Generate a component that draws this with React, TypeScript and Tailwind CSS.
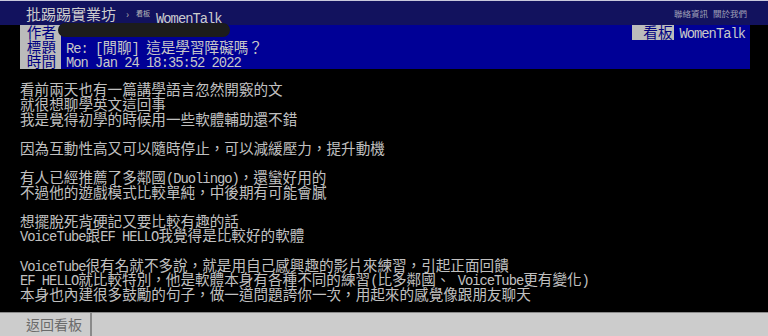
import React from 'react';

const ASCII = /^[\x20-\x7e]+$/;

// half-width runs get a narrow mono face so they take half a CJK cell
const Txt: React.FC<{ s: string }> = ({ s }) => (
  <>
    {s.split(/([\x20-\x7e]+)/).map((p, i) =>
      ASCII.test(p) ? (
        <span
          key={i}
          className="inline-block h-[14.6px] leading-[14.6px] whitespace-pre font-['Liberation_Mono',monospace] text-[13.8px] tracking-[-1px]"
        >
          {p}
        </span>
      ) : (
        <React.Fragment key={i}>{p}</React.Fragment>
      )
    )}
  </>
);

const body = [
  '看前兩天也有一篇講學語言忽然開竅的文',
  '就很想聊學英文這回事',
  '我是覺得初學的時候用一些軟體輔助還不錯',
  '',
  '因為互動性高又可以隨時停止，可以減緩壓力，提升動機',
  '',
  '有人已經推薦了多鄰國(Duolingo)，還蠻好用的',
  '不過他的遊戲模式比較單純，中後期有可能會膩',
  '',
  '想擺脫死背硬記又要比較有趣的話',
  'VoiceTube跟EF HELLO我覺得是比較好的軟體',
  '',
  'VoiceTube很有名就不多說，就是用自己感興趣的影片來練習，引起正面回饋',
  'EF HELLO就比較特別，他是軟體本身有各種不同的練習(比多鄰國、 VoiceTube更有變化)',
  '本身也內建很多鼓勵的句子，做一道問題誇你一次，用起來的感覺像跟朋友聊天',
];

const MetaRow: React.FC<{ tag: string; children?: React.ReactNode; right?: boolean }> = ({ tag, children, right }) => (
  <div className="flex h-[14.6px] items-center">
    <div className="w-[41px] h-full bg-[#bbbbbb] text-[#000080] text-right pr-[5px] leading-[14.6px]">{tag}</div>
    <div className="relative flex-1 h-full pl-[5px] leading-[14.6px] whitespace-pre text-[#c8c8c8]">{children}</div>
    {right && (
      <div className="flex h-full items-center">
        <div className="w-[42px] h-full bg-[#bbbbbb] text-[#000080] text-right pr-[2px] leading-[14.6px]">看板</div>
        <div className="h-full pl-[5px] pr-[5px] leading-[14.6px] text-[#c8c8c8]">
          <Txt s="WomenTalk" />
        </div>
      </div>
    )}
  </div>
);

export default function App() {
  return (
    <div className="w-[768px] h-[336px] bg-black flex flex-col overflow-hidden font-['Noto_Sans_CJK_TC',sans-serif] text-[14.6px]">
      <div className="h-px bg-[#c8c8dc]" />
      {/* top bar */}
      <div className="h-[24px] bg-[#12125e] flex items-center pl-[26px] pr-[21px] text-[#cccccc]">
        <span className="text-[15px] leading-none">批踢踢實業坊</span>
        <span className="ml-[10px] text-[10px] text-[#aaaaaa]">›</span>
        <span className="ml-[7px] text-[7px] text-[#bbbbbb]">看板</span>
        <span className="ml-[6px] h-[14.6px] text-[#cccccc]">
          <Txt s="WomenTalk" />
        </span>
        <div className="ml-auto flex gap-[5px] text-[8.5px] text-[#a0a0b8]">
          <span>聯絡資訊</span>
          <span>關於我們</span>
        </div>
      </div>

      {/* article meta */}
      <div className="mx-[20px] w-[730px] bg-[#000096]">
        <MetaRow tag="作者" right>
          <div className="absolute left-[-3px] top-[-2px] w-[172px] h-[14px] rounded-full bg-[#1c1c1c]" />
        </MetaRow>
        <MetaRow tag="標題">
          <Txt s="Re: [閒聊] 這是學習障礙嗎？" />
        </MetaRow>
        <MetaRow tag="時間">
          <Txt s="Mon Jan 24 18:35:52 2022" />
        </MetaRow>
      </div>

      {/* content */}
      <div className="pl-[20px] mt-[13.7px] text-[#c0c0c0]">
        {body.map((l, i) => (
          <div key={i} className="h-[14.6px] leading-[14.6px] whitespace-pre">
            <Txt s={l} />
          </div>
        ))}
      </div>

      {/* bottom bar */}
      <div className="mt-auto h-[24px] bg-[#cccccc] border-t border-[#8a8a8a] flex">
        <div className="pl-[26px] pr-[8px] border-r-2 border-[#8a8a8a] flex items-center text-[14px] text-[#6a6a6a]">
          返回看板
        </div>
      </div>
    </div>
  );
}
